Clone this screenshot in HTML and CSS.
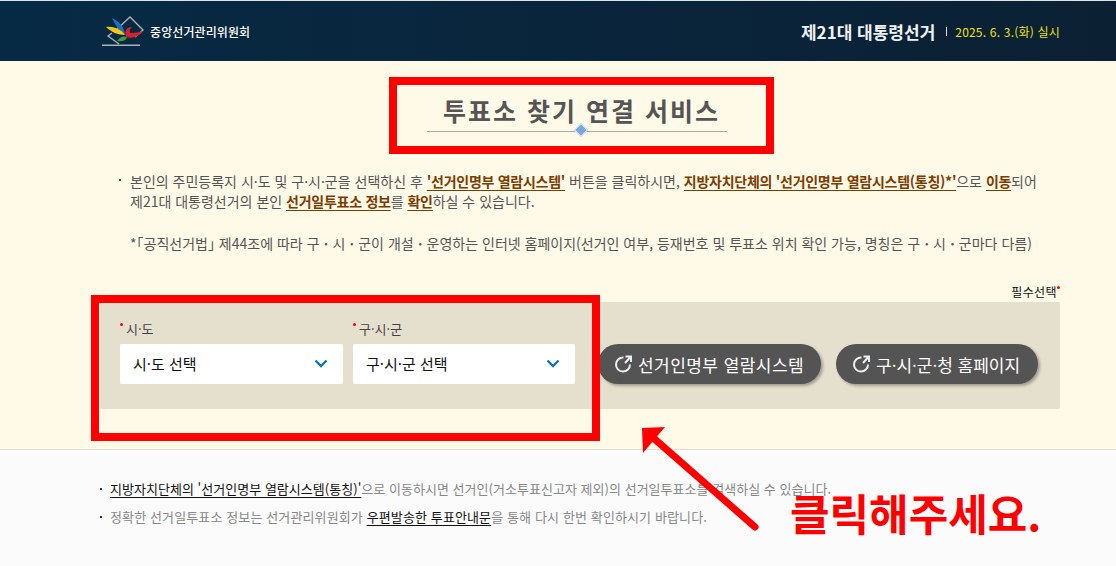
FILE: index.html
```html
<!DOCTYPE html>
<html lang="ko">
<head>
	<meta charset="utf-8">
	<title>투표소 찾기 연결 서비스</title>
	<link rel="stylesheet" href="styles.css">
</head>
<body>
	<header class="header">
		<div class="brand">
			<svg class="logo" width="42" height="30" viewBox="0 0 42 30">
				<g fill="none" stroke="#a9b0b6" stroke-width="1.4">
					<path d="M14 14 L28 1 L41 14 L33 21"/>
					<path d="M10 17 L6 20 L17 28"/>
					<path d="M0 29.2 H38"/>
				</g>
				<path d="M10 2 C17 5 22 11 23 18 C17 15 13 9 10 2 Z" fill="#1f6fc0"/>
				<path d="M4 11 C11 10 19 13 23 19 C16 19 9 16 4 11 Z" fill="#f2c811"/>
				<path d="M16 24 C19 20 22 20 25 21 C24 25 20 26 15 25 Z" fill="#3a9e3f"/>
				<path d="M24 21 C22 14 25 11 30 11 C28 13 27 15 28 17 C33 17 38 16 41 15 C38 20 31 23 24 21 Z" fill="#d8202b"/>
			</svg>
			<span class="brandName">중앙선거관리위원회</span>
		</div>
		<div class="election">
			<strong class="electionName">제21대 대통령선거</strong>
			<span class="electionBar"></span>
			<span class="electionDate">2025. 6. 3.(화) 실시</span>
		</div>
	</header>

	<main class="main">
		<h1 class="title"><span>투표소 찾기 연결 서비스</span></h1>

		<div class="intro">
			<p class="introText">
				본인의 주민등록지 시·도 및 구·시·군을 선택하신 후 <b class="em">'선거인명부 열람시스템'</b> 버튼을 클릭하시면, <b class="em">지방자치단체의 '선거인명부 열람시스템(통칭)*'</b>으로 <b class="em">이동</b>되어<br>
				제21대 대통령선거의 본인 <b class="em">선거일투표소 정보</b>를 <b class="em">확인</b>하실 수 있습니다.
			</p>
			<p class="introNote">*<span class="bracket">「</span>공직선거법<span class="bracket">」</span> 제44조에 따라 구<b>ㆍ</b>시<b>ㆍ</b>군이 개설<b>ㆍ</b>운영하는 인터넷 홈페이지(선거인 여부, 등재번호 및 투표소 위치 확인 가능, 명칭은 구<b>ㆍ</b>시<b>ㆍ</b>군마다 다름)</p>
		</div>

		<div class="required">필수선택<i class="dot"></i></div>
		<div class="panel">
			<div class="field">
				<div class="fieldLabel"><i class="dot"></i>시·도</div>
				<div class="select">
					<span>시·도 선택</span>
					<svg width="14" height="9" viewBox="0 0 14 9"><path d="M1.5 1.5 L7 7 L12.5 1.5" fill="none" stroke="#0f75b5" stroke-width="2.4"/></svg>
				</div>
			</div>
			<div class="field fieldGu">
				<div class="fieldLabel"><i class="dot"></i>구·시·군</div>
				<div class="select">
					<span>구·시·군 선택</span>
					<svg width="14" height="9" viewBox="0 0 14 9"><path d="M1.5 1.5 L7 7 L12.5 1.5" fill="none" stroke="#0f75b5" stroke-width="2.4"/></svg>
				</div>
			</div>
			<a class="btn btnList">
				<svg width="18" height="18" viewBox="0 0 18 18"><path d="M9.5 2.6 A7 7 0 1 0 16 9.5" fill="none" stroke="#eee" stroke-width="2"/><path d="M11 8 L16 2.5 M11.5 1.5 H17 V7" fill="none" stroke="#eee" stroke-width="2"/></svg>
				선거인명부 열람시스템
			</a>
			<a class="btn btnHome">
				<svg width="18" height="18" viewBox="0 0 18 18"><path d="M9.5 2.6 A7 7 0 1 0 16 9.5" fill="none" stroke="#eee" stroke-width="2"/><path d="M11 8 L16 2.5 M11.5 1.5 H17 V7" fill="none" stroke="#eee" stroke-width="2"/></svg>
				구·시·군·청 홈페이지
			</a>
		</div>
	</main>

	<footer class="notes">
		<p class="note noteFirst"><u class="noteLink">지방자치단체의 '선거인명부 열람시스템(통칭)'</u>으로 이동하시면 선거인(거소투표신고자 제외)의 선거일투표소를 검색하실 수 있습니다.</p>
		<p class="note noteSecond">정확한 선거일투표소 정보는 선거관리위원회가 <u class="noteLink">우편발송한 투표안내문</u>을 통해 다시 한번 확인하시기 바랍니다.</p>
	</footer>

	<!-- red marks drawn over the page -->
	<div class="mark markTitle"></div>
	<div class="mark markSelect"></div>
	<svg class="arrow" width="130" height="115" viewBox="0 0 130 115">
		<path d="M120 105 L15 13" stroke="#f00" stroke-width="7" stroke-linecap="round"/>
		<path d="M7 6 L30 5 L8 31 Z" fill="#f00"/>
	</svg>
	<div class="clickText">클릭해주세요.</div>
</body>
</html>
```

FILE: styles.css
```css
* {
	box-sizing: border-box;
}

html, body {
	height: 566px;
	margin: 0;
	overflow: hidden;
}

body {
	background: #fbfbfb;
	color: #555;
	font-family: "Noto Sans CJK KR", "Noto Sans", sans-serif;
	font-size: 13px;
	position: relative;
}

.header {
	align-items: center;
	background: linear-gradient(to right, #072a44, #0b2033);
	border-top: 1px solid #dfe3e6;
	box-shadow: 0 1px 2px rgba(0, 0, 0, 0.25);
	display: flex;
	height: 61px;
	justify-content: space-between;
	padding: 0 56px 0 102px;
}

.brand {
	align-items: center;
	display: flex;
	gap: 6px;
}
.logo {
	display: block;
}
.brandName {
	color: #fff;
	font-size: 12px;
	font-weight: 500;
	letter-spacing: 0.1px;
}

.election {
	align-items: center;
	display: flex;
}
.electionName {
	color: #f0f2f4;
	font-size: 17px;
	font-weight: 700;
}
.electionBar {
	background: #ddd;
	height: 9px;
	margin: 0 8px 0 11px;
	width: 1px;
}
.electionDate {
	color: #f2e30c;
	font-size: 12px;
	letter-spacing: 0.2px;
}

.main {
	background: #fff9e8;
	border-bottom: 1px solid #e6e0d0;
	height: 389px;
	padding: 31px 56px 0 100px;
}

.title {
	border-bottom: 1px solid #aaa;
	color: #555;
	font-size: 25px;
	font-weight: 700;
	height: 40px;
	letter-spacing: 2px;
	line-height: 36px;
	margin: 0 0 0 327px;
	padding-left: 9px;
	position: relative;
	text-align: center;
	white-space: nowrap;
	width: 300px;
}
.title::after {
	background: #7ba7e0;
	border: 1px solid #eaf1fb;
	bottom: -4px;
	content: "";
	height: 8px;
	left: 149px;
	position: absolute;
	transform: rotate(45deg);
	width: 8px;
}

.intro {
	margin-top: 39px;
	padding-left: 30px;
	position: relative;
}
.intro::before {
	background: #555;
	content: "";
	height: 2px;
	left: 19px;
	position: absolute;
	top: 8px;
	width: 2px;
}
.introText, .introNote {
	font-size: 14px;
	line-height: 20px;
	margin: 0;
	white-space: nowrap;
}
.introNote {
	margin-top: 22px;
}
.bracket {
	font-feature-settings: "halt";
}
.em {
	color: #7b3c00;
	font-weight: 700;
	letter-spacing: -0.27px;
	text-decoration: underline;
	text-underline-offset: 3px;
}

.required {
	color: #111;
	font-size: 12px;
	letter-spacing: 0.4px;
	line-height: 14px;
	margin-top: 32px;
	text-align: right;
}
.dot {
	background: #f00;
	border-radius: 50%;
	display: inline-block;
	height: 3px;
	vertical-align: 8px;
	width: 3px;
}

.panel {
	align-items: flex-end;
	background: #e5dfce;
	border-radius: 2px;
	display: flex;
	height: 107px;
	margin-top: 3px;
	padding: 0 0 25px 20px;
}

.field {
	margin-right: 10px;
	width: 223px;
}
.fieldGu {
	margin-right: 0;
	width: 222px;
}
.fieldLabel {
	color: #444;
	font-size: 13px;
	line-height: 18px;
	margin-bottom: 6px;
}
.fieldLabel .dot {
	margin-right: 3px;
}
.select {
	align-items: center;
	background: #fff;
	border-radius: 2px;
	color: #111;
	display: flex;
	font-size: 15px;
	height: 40px;
	justify-content: space-between;
	padding: 0 15px 2px 13px;
}

.btn {
	align-items: center;
	background: #545454;
	border-radius: 20px;
	box-shadow: 2px 2px 3px rgba(0, 0, 0, 0.3);
	color: #fff;
	display: flex;
	font-size: 17px;
	gap: 6px;
	height: 40px;
	padding-left: 16px;
	white-space: nowrap;
}
.btnList {
	letter-spacing: 0.45px;
	margin-left: 23px;
	width: 223px;
}
.btnHome {
	margin-left: 15px;
	width: 202px;
}

.notes {
	padding: 30px 0 0 110px;
}
.note {
	color: #888;
	font-size: 13px;
	line-height: 18px;
	margin: 0 0 10px;
	position: relative;
	white-space: nowrap;
}
.noteFirst {
	letter-spacing: 0.03px;
}
.noteSecond {
	letter-spacing: 0.12px;
}
.note::before {
	background: #333;
	content: "";
	height: 2px;
	left: -10px;
	position: absolute;
	top: 8px;
	width: 2px;
}
.noteLink {
	color: #111;
	text-underline-offset: 3px;
}

.mark {
	border: 8px solid #f00;
	position: absolute;
}
.markTitle {
	height: 77px;
	left: 389px;
	top: 77px;
	width: 385px;
}
.markSelect {
	height: 146px;
	left: 91px;
	top: 295px;
	width: 509px;
}
.arrow {
	left: 635px;
	position: absolute;
	top: 422px;
}
.clickText {
	color: #f00;
	font-size: 43px;
	font-weight: 700;
	left: 790px;
	line-height: 44px;
	position: absolute;
	top: 490px;
	white-space: nowrap;
}
```
